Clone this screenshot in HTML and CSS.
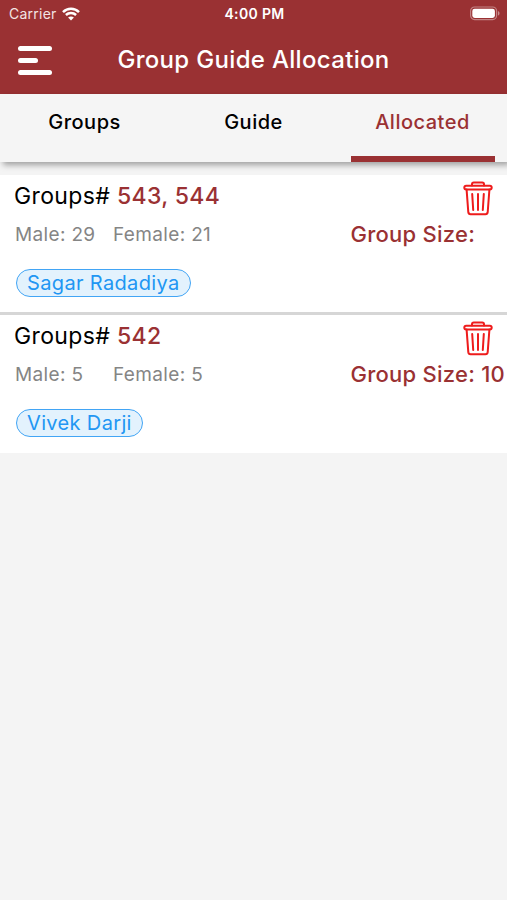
FILE: index.html
```html
<!DOCTYPE html>
<html lang="en">
<head>
    <meta charset="UTF-8">
    <meta name="viewport" content="width=device-width, initial-scale=1.0">
    <title>Group Guide Allocation</title>
    <link rel="stylesheet" href="styles.css">
</head>
<body>

<!-- Header -->
<header class="header">
    <div class="status-bar">
        <div class="carrier">
            <span>Carrier</span>
            <svg class="wifi-icon" width="18" height="14" viewBox="0 0 18 14" fill="none" stroke="#fff" stroke-width="2.5">
                <path d="M1 5.1C5.5 .7 12.5 .7 17 5.1"/>
                <path d="M3.9 8C6.8 5.3 11.2 5.3 14.1 8"/>
                <path d="M9 13.6L6.1 10.6C7.8 9.1 10.2 9.1 11.9 10.6Z" fill="#fff" stroke="none"/>
            </svg>
        </div>
        <span class="time">4:00 PM</span>
        <svg class="battery-icon" width="31" height="15" viewBox="0 0 31 15">
            <rect x="1.6" y="1" width="26" height="12.6" rx="4" fill="none" stroke="#fff" stroke-opacity=".4" stroke-width="1.2"/>
            <rect x="3.3" y="2.7" width="22.6" height="9.2" rx="2.4" fill="#fff"/>
            <path d="M29 5v4.6c2-.8 2-3.8 0-4.6z" fill="#fff" fill-opacity=".45"/>
        </svg>
    </div>
    <div class="title-bar">
        <button class="menu-button" aria-label="Menu">
            <span class="line"></span>
            <span class="line short"></span>
            <span class="line"></span>
        </button>
        <h1 class="title">Group Guide Allocation</h1>
    </div>
</header>

<!-- Tabs -->
<nav class="tabs">
    <a class="tab">Groups</a>
    <a class="tab">Guide</a>
    <a class="tab active">Allocated</a>
</nav>

<!-- Allocated groups -->
<main class="list">
    <section class="card">
        <div class="row">
            <h2 class="groups">Groups# <span class="numbers">543, 544</span></h2>
            <button class="delete-button" aria-label="Delete">
                <svg width="30" height="35" viewBox="0 0 30 35" fill="none" stroke="#ee1c1c" stroke-width="2" stroke-linecap="round" stroke-linejoin="round">
                    <path d="M9 4.6V3.2Q9 1.6 10.8 1.6H19.2Q21 1.6 21 3.2V4.6"/>
                    <rect x="1.3" y="4.7" width="27.4" height="3.8" rx="1.9"/>
                    <path d="M3.6 8.6L5.3 31.2Q5.5 33.2 7.5 33.2H22.5Q24.5 33.2 24.7 31.2L26.4 8.6"/>
                    <path d="M9.2 13L10.2 29M15 13V29M20.8 13L19.8 29"/>
                </svg>
            </button>
        </div>
        <div class="row">
            <div class="counts">
                <span class="male">Male: 29</span>
                <span>Female: 21</span>
            </div>
            <span class="size">Group Size:</span>
        </div>
        <span class="guide">Sagar Radadiya</span>
    </section>

    <section class="card">
        <div class="row">
            <h2 class="groups">Groups# <span class="numbers">542</span></h2>
            <button class="delete-button" aria-label="Delete">
                <svg width="30" height="35" viewBox="0 0 30 35" fill="none" stroke="#ee1c1c" stroke-width="2" stroke-linecap="round" stroke-linejoin="round">
                    <path d="M9 4.6V3.2Q9 1.6 10.8 1.6H19.2Q21 1.6 21 3.2V4.6"/>
                    <rect x="1.3" y="4.7" width="27.4" height="3.8" rx="1.9"/>
                    <path d="M3.6 8.6L5.3 31.2Q5.5 33.2 7.5 33.2H22.5Q24.5 33.2 24.7 31.2L26.4 8.6"/>
                    <path d="M9.2 13L10.2 29M15 13V29M20.8 13L19.8 29"/>
                </svg>
            </button>
        </div>
        <div class="row">
            <div class="counts">
                <span class="male">Male: 5</span>
                <span>Female: 5</span>
            </div>
            <span class="size">Group Size: 10</span>
        </div>
        <span class="guide">Vivek Darji</span>
    </section>
</main>

</body>
</html>
```
FILE: styles.css
```css
* {
    box-sizing: border-box;
}

body {
    margin: 0;
    min-height: 100vh;
    background-color: #f4f4f4;
    font-family: Inter, "Liberation Sans", sans-serif;
    color: #000;
    overflow-x: hidden;
}

button {
    padding: 0;
    border: none;
    background: none;
    cursor: pointer;
}

svg {
    display: block;
}

/* Header */
.header {
    height: 94px;
    background-color: #9a3133;
    color: #fff;
}

.status-bar {
    display: grid;
    grid-template-columns: 1fr auto 1fr;
    align-items: center;
    height: 27px;
    padding: 0 7px 0 9px;
    font-size: 14px;
}

.carrier {
    display: flex;
    align-items: center;
    gap: 5px;
    color: #f3e4e4;
    letter-spacing: 0.25px;
}

.time {
    font-weight: 600;
    letter-spacing: 0.35px;
}

.battery-icon {
    justify-self: end;
}

.title-bar {
    display: grid;
    grid-template-columns: 36px 1fr 36px;
    align-items: center;
    height: 66px;
    padding: 0 17px;
}

.menu-button {
    display: flex;
    flex-direction: column;
    gap: 7px;
    padding-left: 1px;
}

.line {
    width: 34px;
    height: 5px;
    border-radius: 3px;
    background-color: #fff;
}

.line.short {
    width: 20px;
}

.title {
    margin: 0;
    padding-bottom: 2px;
    font-size: 24px;
    font-weight: 500;
    letter-spacing: 0.32px;
    text-align: center;
    white-space: nowrap;
}

/* Tabs */
.tabs {
    display: grid;
    grid-template-columns: repeat(3, 144px);
    justify-content: space-between;
    height: 68px;
    padding: 0 12.5px;
    background-color: #f5f5f5;
    box-shadow: 3px 3px 6px rgba(0, 0, 0, 0.35);
}

.tab {
    padding-top: 14px;
    border-bottom: 6px solid transparent;
    font-size: 20px;
    font-weight: 500;
    line-height: 28px;
    letter-spacing: 0.5px;
    text-align: center;
}

.tab.active {
    color: #9a3133;
    border-bottom-color: #9a3133;
}

/* Cards */
.list {
    padding-top: 13px;
}

.card {
    height: 137px;
    padding: 6px 0 0 14px;
    background-color: #fff;
}

.card + .card {
    height: 141px;
    border-top: 3px solid #d6d6d6;
}

.row {
    display: flex;
    justify-content: space-between;
    height: 38px;
}

.groups {
    margin: 0;
    font-size: 23px;
    font-weight: 400;
    line-height: 30px;
    letter-spacing: 0.35px;
}

.numbers {
    color: #9a3133;
    font-weight: 500;
}

.delete-button {
    align-self: flex-start;
    margin-right: 14.5px;
}

.counts {
    display: flex;
    padding-left: 1px;
    color: #858585;
    font-size: 19px;
    line-height: 32px;
    letter-spacing: 0.35px;
}

.male {
    width: 98px;
}

.size {
    width: 156.5px;
    color: #9a3133;
    font-size: 22px;
    font-weight: 500;
    line-height: 30px;
    letter-spacing: 0.25px;
    white-space: nowrap;
}

.guide {
    display: inline-block;
    height: 28px;
    margin: 12px 0 0 2px;
    padding: 0 10px;
    border: 1.5px solid #42a5f5;
    border-radius: 14px;
    background-color: #e3f2fd;
    color: #2196f3;
    font-size: 20px;
    line-height: 26px;
    letter-spacing: 0.35px;
}
```
